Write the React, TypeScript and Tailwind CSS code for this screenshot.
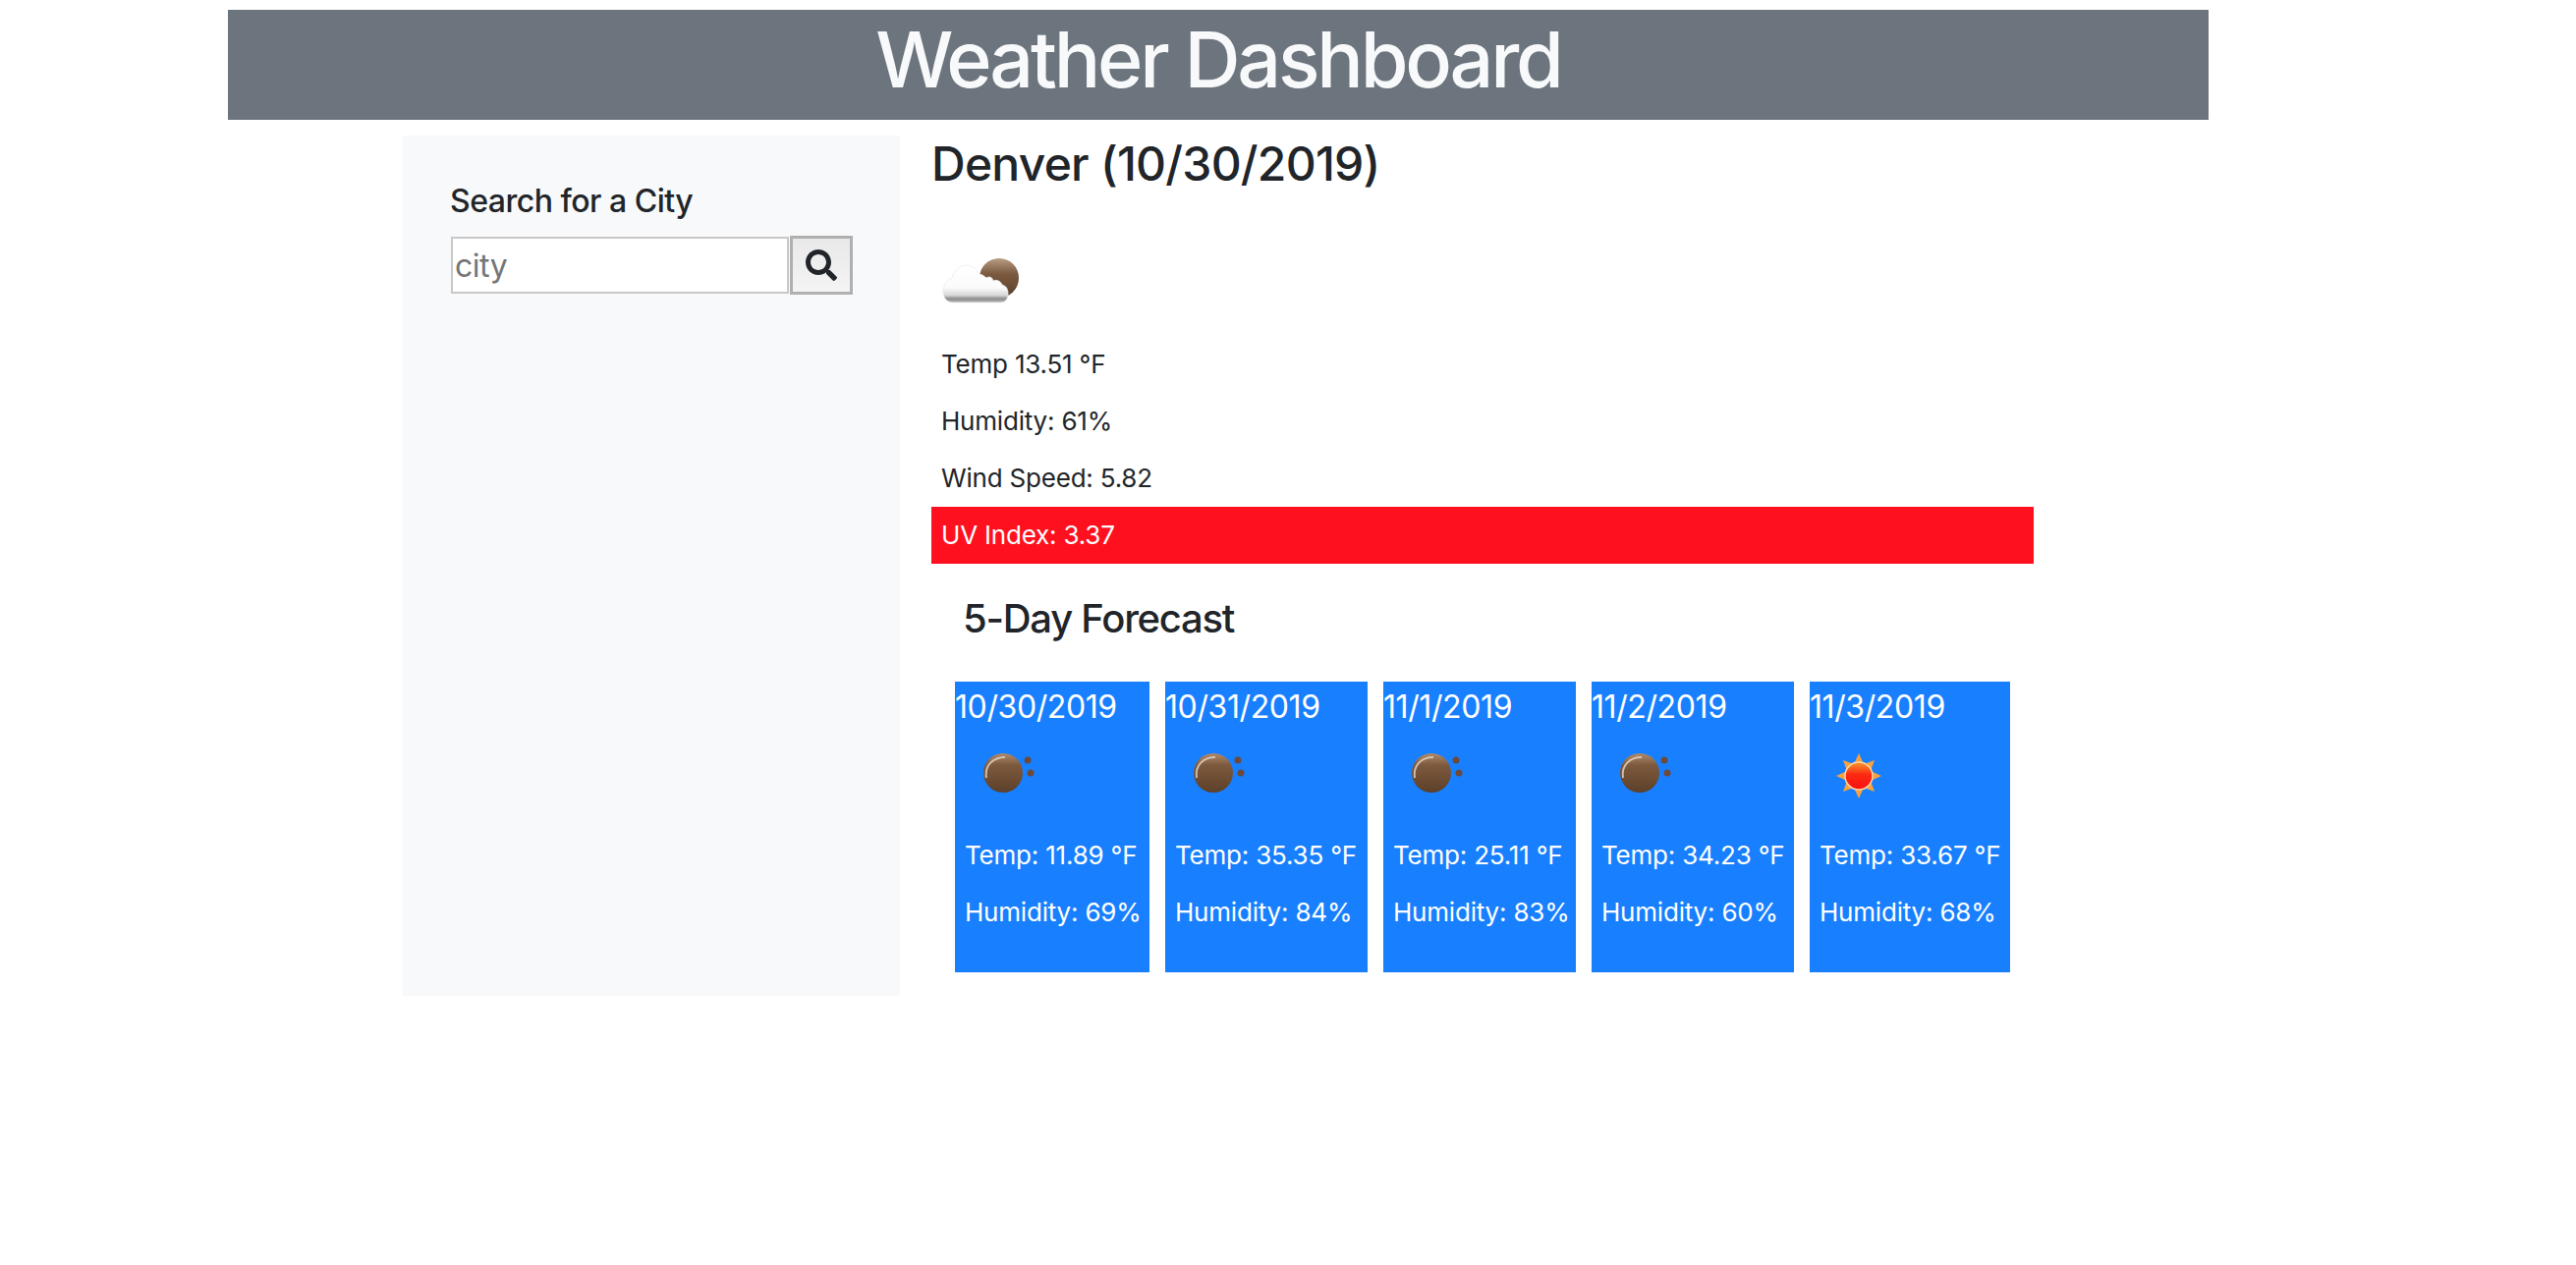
import { FaSearch } from "react-icons/fa";

function Moon() {
  return (
    <svg width="100" height="100" viewBox="0 0 100 100" className="block">
      <defs>
        <linearGradient id="mg" x1="0" y1="0" x2="0" y2="1">
          <stop offset="0" stopColor="#b08a6a" />
          <stop offset="0.3" stopColor="#7d5a3e" />
          <stop offset="1" stopColor="#5c4029" />
        </linearGradient>
      </defs>
      <circle cx="39" cy="47" r="20" fill="url(#mg)" />
      <path d="M22 52 C20 39 29 31 41 31" fill="none" stroke="#e3d0bd" strokeWidth="2" opacity="0.85" />
      <circle cx="64" cy="34" r="3.5" fill="#6e4a3a" />
      <circle cx="67" cy="47" r="3.5" fill="#6e4a3a" />
    </svg>
  );
}

function Sun() {
  return (
    <svg width="100" height="100" viewBox="0 0 100 100" className="block">
      <defs>
        <linearGradient id="sg" x1="0" y1="0" x2="0" y2="1">
          <stop offset="0" stopColor="#f79a2b" />
          <stop offset="0.45" stopColor="#fb2a12" />
          <stop offset="1" stopColor="#fb0f12" />
        </linearGradient>
      </defs>
      <polygon
        fill="#f6a13f"
        points="40,27 45,38 56,34 52,45 63,50 52,55 56,66 45,62 40,73 35,62 24,66 28,55 17,50 28,45 24,34 35,38"
      />
      <circle cx="40" cy="50" r="14" fill="url(#sg)" stroke="#fbd6a8" strokeWidth="1.5" />
    </svg>
  );
}

function CloudMoon() {
  return (
    <svg width="100" height="100" viewBox="0 0 100 100" className="block">
      <defs>
        <linearGradient id="cm" x1="0" y1="0" x2="0" y2="1">
          <stop offset="0" stopColor="#b89c84" />
          <stop offset="0.4" stopColor="#7a5a40" />
          <stop offset="1" stopColor="#5c4029" />
        </linearGradient>
        <linearGradient id="cl" x1="0" y1="0" x2="0" y2="1">
          <stop offset="0" stopColor="#ffffff" />
          <stop offset="0.6" stopColor="#fbfbfb" />
          <stop offset="0.8" stopColor="#d9d9d9" />
          <stop offset="0.9" stopColor="#8e8e8e" />
          <stop offset="1" stopColor="#b5b5b5" />
        </linearGradient>
      </defs>
      <circle cx="59" cy="48" r="20" fill="url(#cm)" />
      <path
        d="M12 73 C4 73 2 66 2 62 C2 55 6 50 11 48 C13 40 19 35 25 35 C31 35 36 38 38 44 C41 44 44 46 46 48 C49 46 52 47 53 51 C57 49 61 52 62 55 C66 56 68 59 68 64 C68 70 65 73 60 73 Z"
        fill="url(#cl)"
        stroke="#ececec"
        strokeWidth="0.8"
      />
    </svg>
  );
}

const cards = [
  { date: "10/30/2019", temp: "Temp: 11.89 °F", hum: "Humidity: 69%", w: "w-[198px]", icon: <Moon /> },
  { date: "10/31/2019", temp: "Temp: 35.35 °F", hum: "Humidity: 84%", w: "w-[206px]", icon: <Moon /> },
  { date: "11/1/2019", temp: "Temp: 25.11 °F", hum: "Humidity: 83%", w: "w-[196px]", icon: <Moon /> },
  { date: "11/2/2019", temp: "Temp: 34.23 °F", hum: "Humidity: 60%", w: "w-[206px]", icon: <Moon /> },
  { date: "11/3/2019", temp: "Temp: 33.67 °F", hum: "Humidity: 68%", w: "w-[204px]", icon: <Sun /> },
];

export default function App() {
  return (
    <div className="min-h-[1288px] bg-white pt-[10px] pl-[232px] text-[#212529] font-['Inter',sans-serif]">
      <header className="flex h-[112px] w-[2016px] items-center justify-center bg-[#6c757d]">
        <h1 className="-mt-[12px] text-[79px] leading-none font-[550] tracking-[-3.2px] text-[#f8f9fa]">Weather Dashboard</h1>
      </header>

      <div className="mt-[16px] ml-[178px] flex">
        <aside className="h-[876px] w-[506px] bg-[#f8f9fa] pt-[48px] pl-[49px]">
          <h2 className="-ml-[1px] text-[32px] leading-[38px] font-medium tracking-[-0.5px]">Search for a City</h2>
          <div className="mt-[16px] flex items-center gap-[1px]">
            <input
              placeholder="city"
              className="h-[58px] w-[344px] border-2 border-[#c8c8c8] bg-white pl-[2px] text-[32px] tracking-[-0.5px] outline-none placeholder:text-[#757575]"
            />
            <button className="flex h-[60px] w-[64px] items-center justify-center border-[3px] border-[#b0b0b0] bg-linear-to-b from-[#e9e9e9] to-[#f4f4f4] text-[#212529]">
              <FaSearch size={32} />
            </button>
          </div>
        </aside>

        <main className="ml-[32px] w-[1122px]">
          <h2 className="text-[48px] leading-[58px] font-medium tracking-[-0.75px]">Denver (10/30/2019)</h2>
          <div className="mt-[39px] pl-[10px]">
            <CloudMoon />
          </div>
          <ul className="mt-[7px] text-[26px] tracking-[-0.2px] text-[#212529]">
            <li className="flex h-[58px] items-center pb-[1px] pl-[10px]">Temp 13.51 °F</li>
            <li className="flex h-[58px] items-center pb-[1px] pl-[10px]">Humidity: 61%</li>
            <li className="flex h-[58px] items-center pb-[1px] pl-[10px]">Wind Speed: 5.82</li>
            <li className="flex h-[58px] items-center bg-[#ff101f] pb-[1px] pl-[10px] text-white">UV Index: 3.37</li>
          </ul>
          <h3 className="mt-[32px] ml-[32px] text-[40px] leading-[48px] font-medium tracking-[-1.25px]">5-Day Forecast</h3>
          <div className="mt-[40px] ml-[24px] flex gap-[16px]">
            {cards.map((c) => (
              <div key={c.date} className={`${c.w} h-[296px] bg-[#187fff] text-white`}>
                <div className="flex h-[48px] items-center pt-[3px] text-[32px] tracking-[-0.4px] whitespace-nowrap">{c.date}</div>
                <div className="ml-[10px] -mt-[2px]">{c.icon}</div>
                <p className="mt-[1px] flex h-[58px] items-center pl-[10px] text-[26px] tracking-[-0.2px] whitespace-nowrap">{c.temp}</p>
                <p className="flex h-[58px] items-center pl-[10px] text-[26px] tracking-[-0.2px] whitespace-nowrap">{c.hum}</p>
              </div>
            ))}
          </div>
        </main>
      </div>
    </div>
  );
}
